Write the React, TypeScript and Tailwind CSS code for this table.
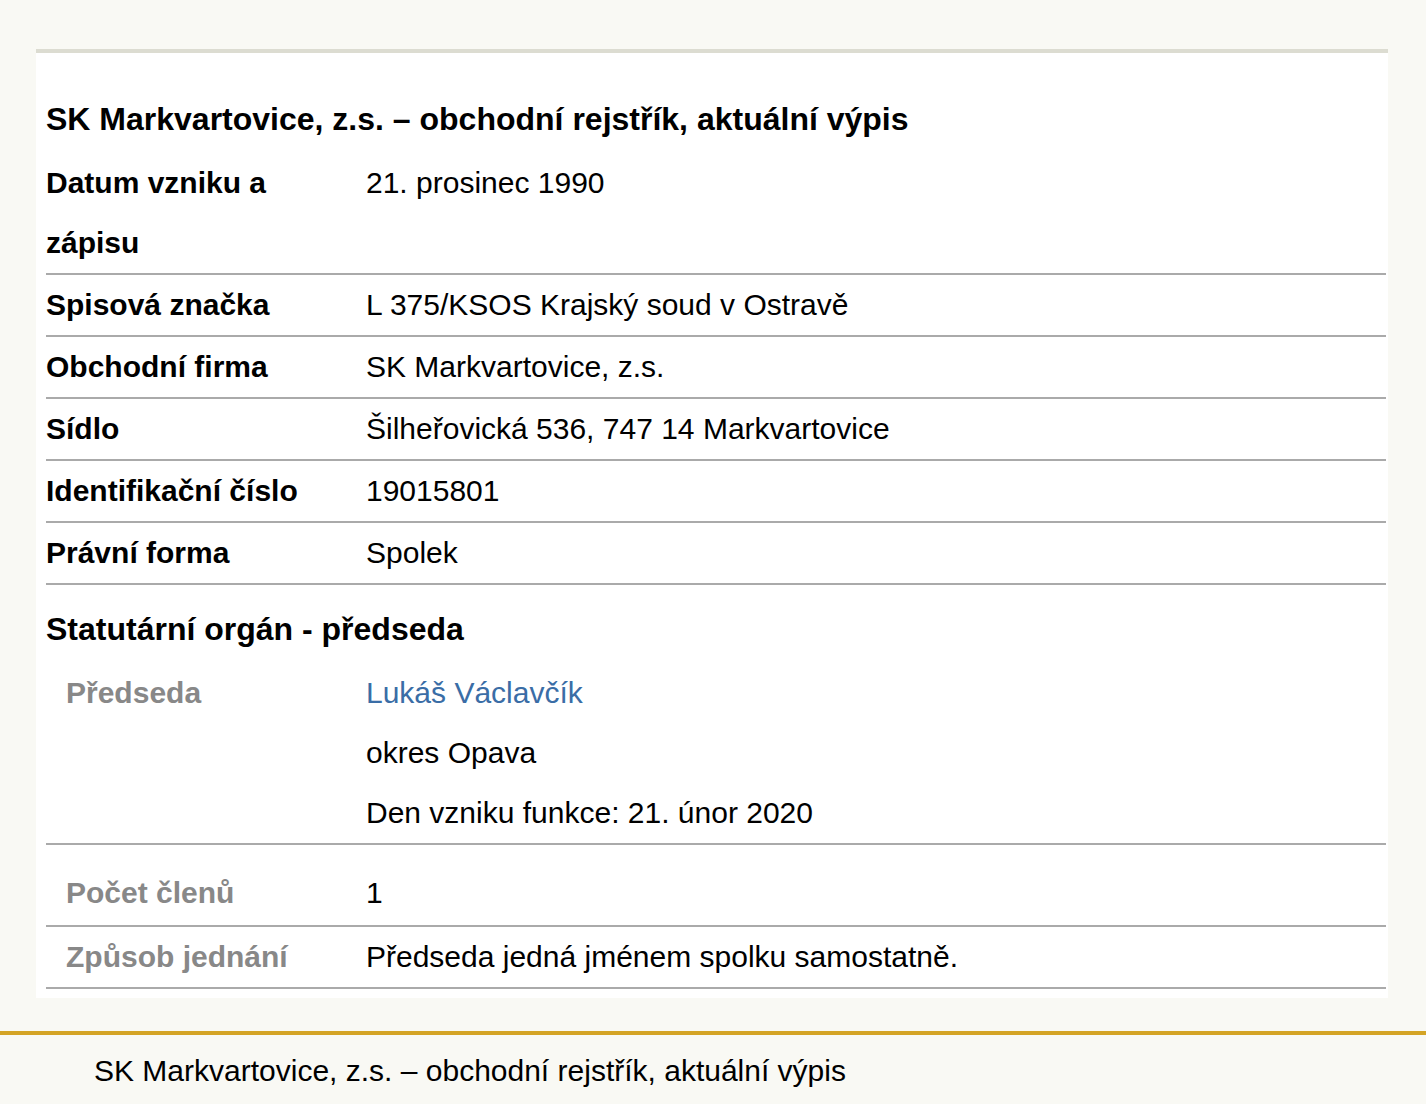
type Row = { label: string; value: string };

const basic: Row[] = [
  { label: "Spisová značka", value: "L 375/KSOS Krajský soud v Ostravě" },
  { label: "Obchodní firma", value: "SK Markvartovice, z.s." },
  { label: "Sídlo", value: "Šilheřovická 536, 747 14 Markvartovice" },
  { label: "Identifikační číslo", value: "19015801" },
  { label: "Právní forma", value: "Spolek" },
];

export default function App() {
  return (
    <div className="min-h-[1104px] bg-[#f9f9f4] font-['Liberation_Sans',Arial,sans-serif] text-[30px] text-black">
      <div className="px-[36px] pt-[49px] pr-[38px]">
        <section className="border-t-4 border-[#dcdcd1] bg-white pl-[10px] pr-[2px] pt-[48px] pb-[9px]">
          <h1 className="text-[32px] font-bold leading-[36px]">
            SK Markvartovice, z.s. – obchodní rejstřík, aktuální výpis
          </h1>

          <div className="mt-[16px]">
            <div className="grid grid-cols-[320px_1fr] border-b-2 border-[#aaaaaa] leading-[60px]">
              <div className="pr-4 font-bold">Datum vzniku a zápisu</div>
              <div>21. prosinec 1990</div>
            </div>
            {basic.map((r) => (
              <div
                key={r.label}
                className="grid grid-cols-[320px_1fr] border-b-2 border-[#aaaaaa] leading-[60px]"
              >
                <div className="font-bold">{r.label}</div>
                <div>{r.value}</div>
              </div>
            ))}
          </div>

          <h2 className="pt-[26px] pb-[16px] text-[32px] font-bold leading-[36px]">
            Statutární orgán - předseda
          </h2>

          <div className="grid grid-cols-[320px_1fr] border-b-2 border-[#aaaaaa] leading-[60px]">
            <div className="pl-[20px] font-bold text-[#888888]">Předseda</div>
            <div>
              <a className="block text-[#3a6da6]">Lukáš Václavčík</a>
              <p>okres Opava</p>
              <p>Den vzniku funkce: 21. únor 2020</p>
            </div>
          </div>

          <div className="grid grid-cols-[320px_1fr] border-b-2 border-[#aaaaaa] pt-[18px] pb-[2px] leading-[60px]">
            <div className="pl-[20px] font-bold text-[#888888]">Počet členů</div>
            <div>1</div>
          </div>
          <div className="grid grid-cols-[320px_1fr] border-b-2 border-[#aaaaaa] leading-[60px]">
            <div className="pl-[20px] font-bold text-[#888888]">Způsob jednání</div>
            <div>Předseda jedná jménem spolku samostatně.</div>
          </div>
        </section>
      </div>

      <footer className="mt-[33px] border-t-4 border-[#d4a425] px-[94px] pt-[18px] pb-[14px] leading-[36px]">
        SK Markvartovice, z.s. – obchodní rejstřík, aktuální výpis
      </footer>
    </div>
  );
}
